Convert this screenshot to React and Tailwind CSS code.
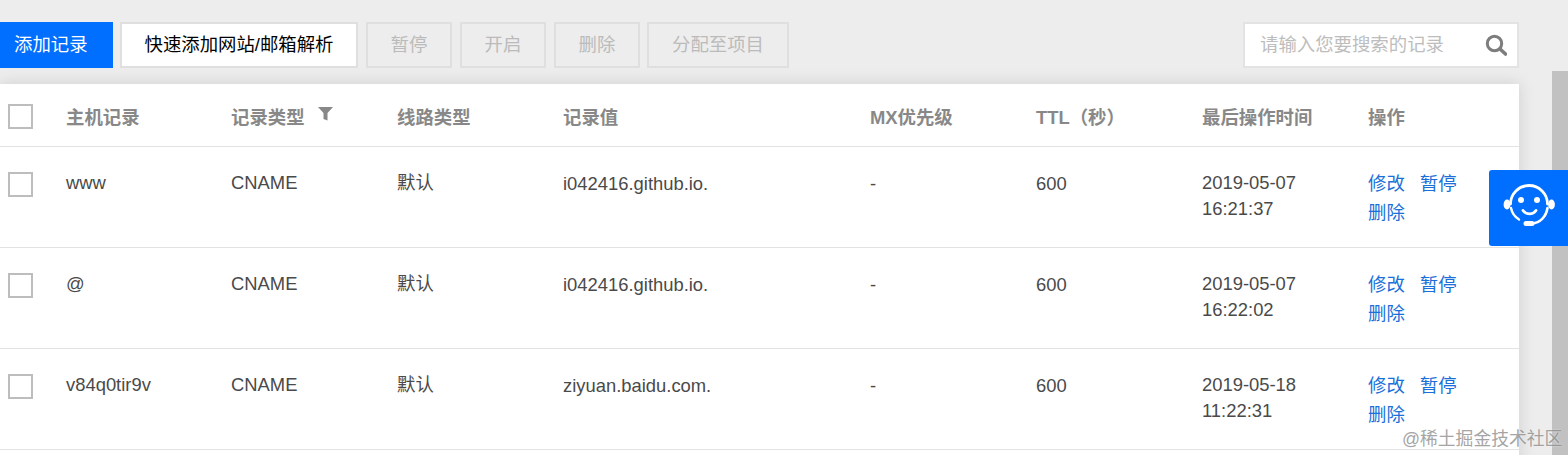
const FONT = "font-['Liberation_Sans','Noto_Sans_CJK_SC',sans-serif]";

const rows = [
  { host: "www", value: "i042416.github.io.", date: "2019-05-07", time: "16:21:37" },
  { host: "@", value: "i042416.github.io.", date: "2019-05-07", time: "16:22:02" },
  { host: "v84q0tir9v", value: "ziyuan.baidu.com.", date: "2019-05-18", time: "11:22:31" },
];

const GRID = "grid grid-cols-[66px_165px_166px_166px_307px_166px_166px_166px_1fr]";

function Box() {
  return <span className="block w-[25px] h-[25px] ml-2 border-2 border-[#bdbdbd] bg-white" />;
}

function DisabledBtn({ label, w, extra = "" }) {
  return (
    <button className={`h-[46px] ${w} ${extra} border-2 border-[#dfdfdf] text-[#bbbbbb] bg-[#ededed] flex items-center justify-center`}>
      {label}
    </button>
  );
}

function Funnel() {
  return (
    <svg width="15" height="14" viewBox="0 0 15 14" className="ml-[13px] mt-[-8px]">
      <path d="M0 0H15L9.5 6V13.5L5.5 12V6Z" fill="#888888" />
    </svg>
  );
}

function Search() {
  return (
    <svg width="22" height="22" viewBox="0 0 22 22" fill="none" stroke="#7d7d7d">
      <circle cx="9.5" cy="9.5" r="7.2" strokeWidth="3" />
      <path d="M15 15L20.5 20" strokeWidth="3.6" strokeLinecap="round" />
    </svg>
  );
}

function Agent() {
  return (
    <svg width="79" height="76" viewBox="0 0 79 76" fill="none" stroke="white" strokeLinecap="round">
      <path d="M21.5 34A18.5 18.5 0 0 1 58.5 34" strokeWidth="2.8" />
      <path d="M22 38C23 43 26 47 30 49.5" strokeWidth="2.4" />
      <path d="M58.5 38C57 47 51 53 43 53.5" strokeWidth="2.6" />
      <ellipse cx="18" cy="34.5" rx="3.4" ry="5" fill="white" stroke="none" />
      <ellipse cx="62.5" cy="34.5" rx="3.4" ry="5" fill="white" stroke="none" />
      <circle cx="32" cy="30" r="3" fill="white" stroke="none" />
      <circle cx="48" cy="30" r="3" fill="white" stroke="none" />
      <path d="M34 40.5C37 45 44 45 47 40.5" strokeWidth="2.8" />
      <path d="M37 53.5H43" strokeWidth="5" />
    </svg>
  );
}

export default function App() {
  return (
    <div className={`relative w-[1568px] h-[455px] overflow-hidden bg-[#ededed] flex text-[18.4px] ${FONT}`}>
      <div className="w-[1552px] shrink-0">
        <div className="w-[1519px] pt-[22px] flex justify-between">
          <div className="flex gap-2 leading-[26px]">
            <button className="h-[46px] w-[113px] mr-[-1px] pl-[14px] bg-[#006eff] text-white flex items-center justify-start">添加记录</button>
            <button className="h-[46px] w-[238px] bg-white border-2 border-[#dfdfdf] text-black flex items-center justify-center">快速添加网站/邮箱解析</button>
            <DisabledBtn label="暂停" w="w-[86px]" />
            <DisabledBtn label="开启" w="w-[86px]" />
            <DisabledBtn label="删除" w="w-[86px]" extra="mr-[-1px]" />
            <DisabledBtn label="分配至项目" w="w-[142px]" />
          </div>
          <div className="h-[46px] w-[276px] bg-white border-2 border-[#e3e3e3] flex items-center justify-between pl-[15px] pr-[10px]">
            <span className="text-[#bdbdbd]">请输入您要搜索的记录</span>
            <Search />
          </div>
        </div>

        <div className="w-[1519px] h-[400px] mt-[16px] bg-white shadow-[0_0_16px_rgba(0,0,0,0.13)]">
          <div className={`${GRID} h-[63px] items-center border-b border-[#e2e2e2] font-bold text-[#888888] pt-[6px]`}>
            <div className="mt-[-4px]"><Box /></div>
            <span>主机记录</span>
            <span className="flex items-center">记录类型<Funnel /></span>
            <span>线路类型</span>
            <span>记录值</span>
            <span>MX优先级</span>
            <span>TTL（秒）</span>
            <span>最后操作时间</span>
            <span>操作</span>
          </div>
          {rows.map((r) => (
            <div key={r.time} className={`${GRID} h-[101px] border-b border-[#e2e2e2] text-[#4a4a4a] pt-[23px] leading-[26px]`}>
              <div className="pt-[2px]"><Box /></div>
              <span>{r.host}</span>
              <span>CNAME</span>
              <span>默认</span>
              <span className="pt-[1px]">{r.value}</span>
              <span className="pt-[1px]">-</span>
              <span className="pt-[1px]">600</span>
              <div className="flex flex-col">
                <span>{r.date}</span>
                <span>{r.time}</span>
              </div>
              <div className="text-[#1a6fd8] leading-[29px] mt-[-1px]">
                <div className="flex gap-[15px]"><span>修改</span><span>暂停</span></div>
                <div>删除</div>
              </div>
            </div>
          ))}
        </div>
      </div>

      <div className="w-4 shrink-0 pt-[71px]">
        <div className="h-full bg-[#c1c1c1]" />
      </div>

      <div className="absolute left-[1489px] top-[170px] w-[79px] h-[76px] bg-[#006eff] rounded-l-[3px]">
        <Agent />
      </div>

      <div className="absolute left-[1402px] top-[427px] text-[17.8px] leading-[24px] text-[#8f8f8f] whitespace-nowrap opacity-80 [text-shadow:0_0_2px_rgba(255,255,255,0.8)]">
        @稀土掘金技术社区
      </div>
    </div>
  );
}
